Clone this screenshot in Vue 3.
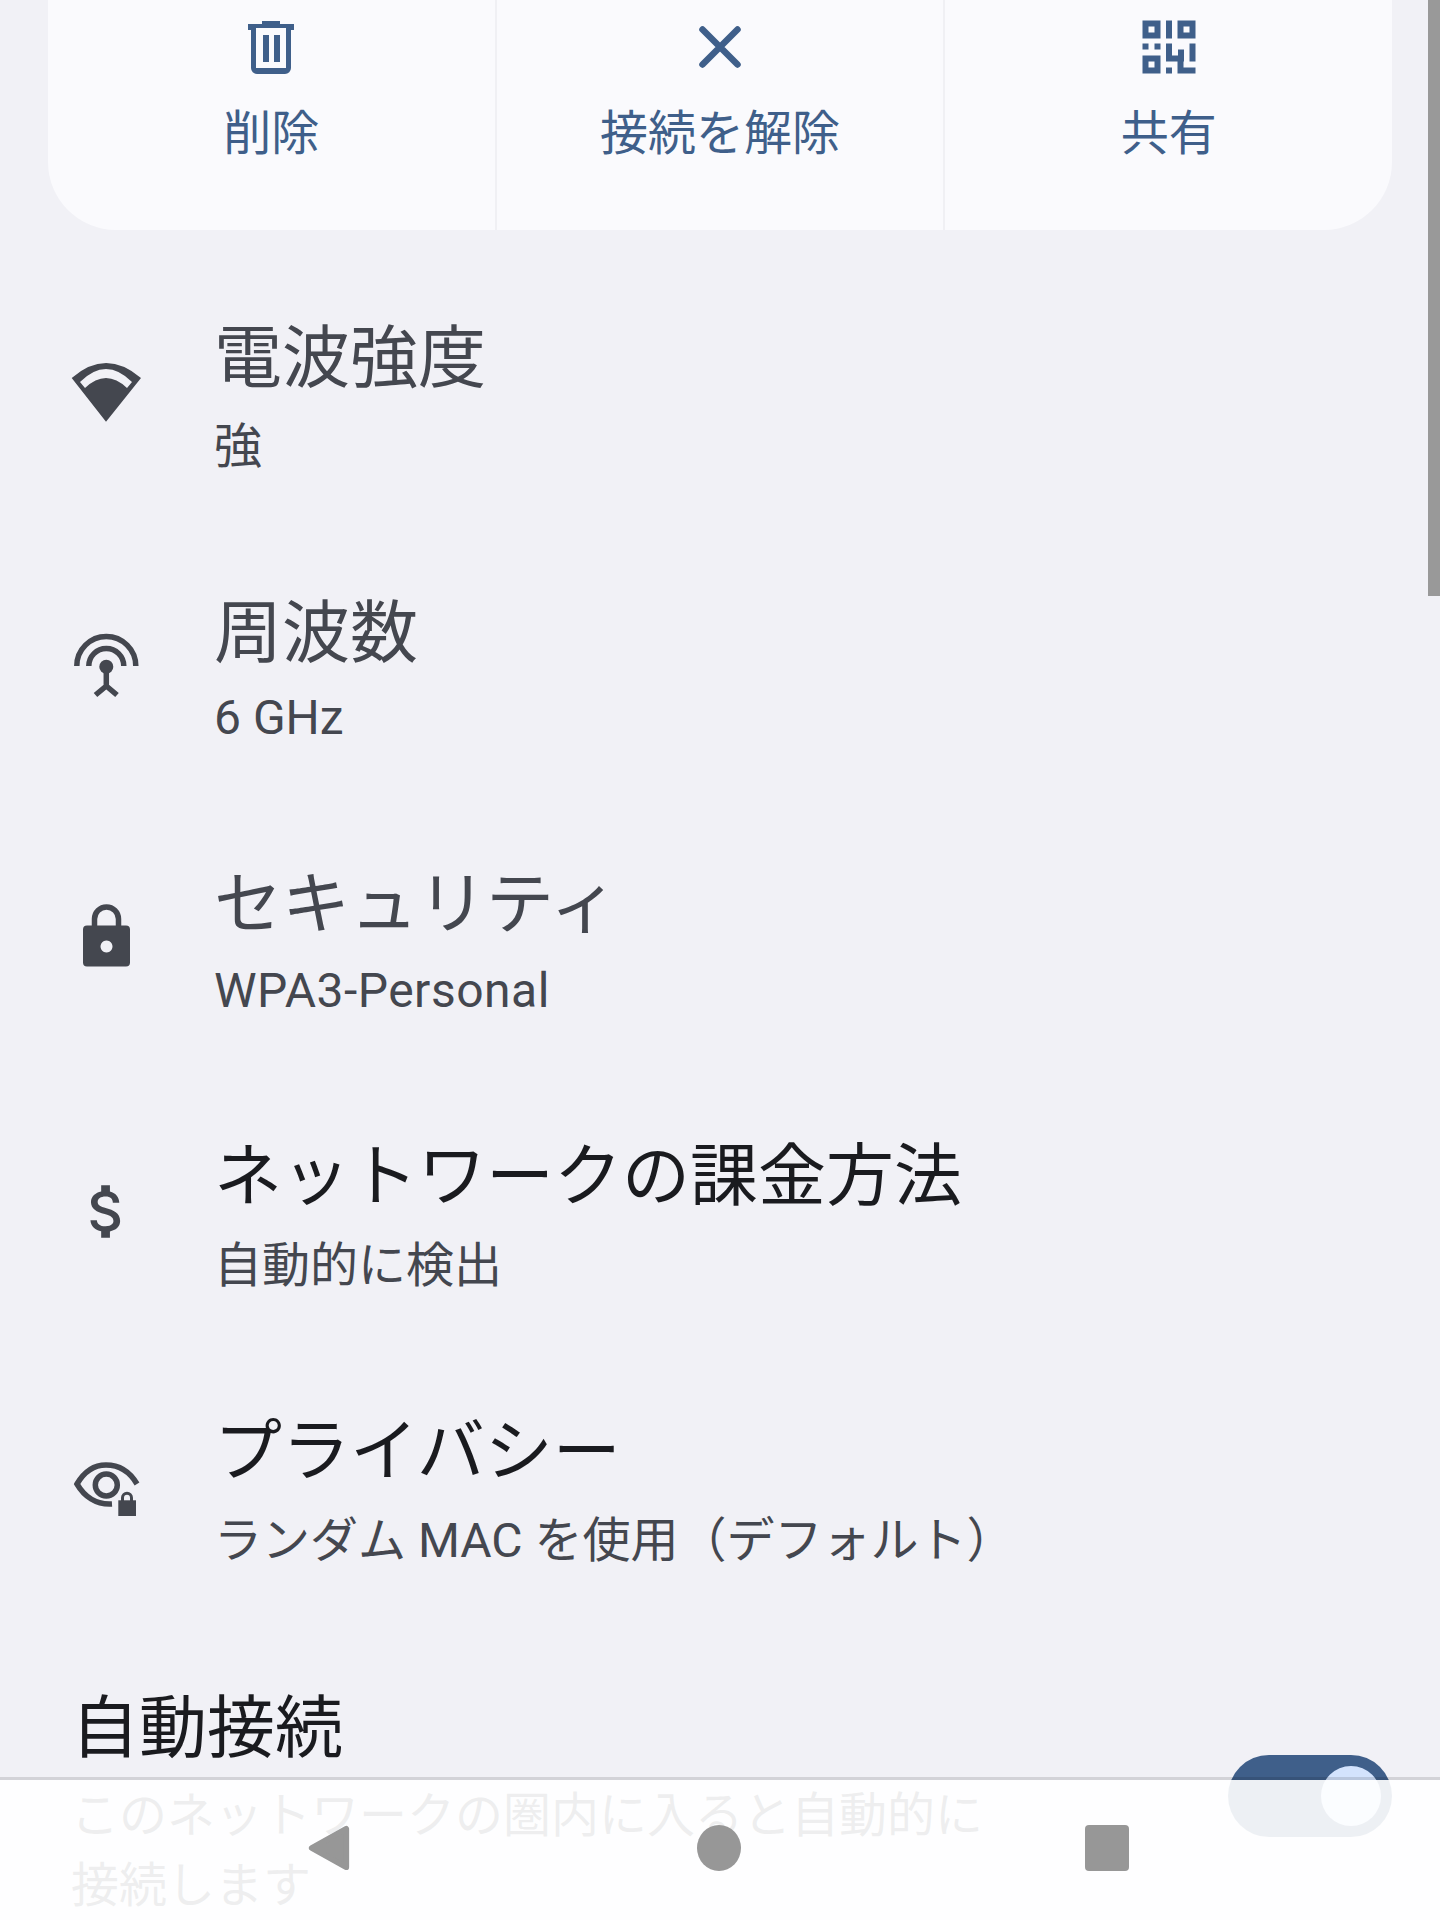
<template>
  <div class="screen">
    <div class="actions">
      <div class="action">
        <svg class="action-icon" viewBox="0 0 60 60">
          <path fill-rule="evenodd" d="M21 4h18v3h14v6h-3v38a6 6 0 0 1-6 6H16a6 6 0 0 1-6-6V13H7V7h14zM15 11v40h30V11zM22 18h6v27h-6zM33 18h6v27h-6z" />
        </svg>
        <span>削除</span>
      </div>
      <div class="action">
        <svg class="action-icon" viewBox="0 0 60 60">
          <path d="M12.5 12.5l35 35M47.5 12.5l-35 35" fill="none" stroke-width="6.5" stroke-linecap="round" />
        </svg>
        <span>接続を解除</span>
      </div>
      <div class="action">
        <svg class="action-icon" viewBox="0 0 60 60">
          <path fill-rule="evenodd" d="M3.5 3.5h18v18h-18zM9.5 9.5v6h6v-6zM38.5 3.5h18v18h-18zM44.5 9.5v6h6v-6zM3.5 38.5h18v18h-18zM9.5 44.5v6h6v-6z" />
          <path d="M27 3.5h6v18h-6zM3.5 26.500h6v6h-6zM15.500 26.500h6v6h-6zM27 26.500h6v12h6v-6h6v12H27zM50.500 26.500h6v18h-6zM27 50.500h6v6h-6zM38.500 44.500h6v6h12v6h-18z" />
        </svg>
        <span>共有</span>
      </div>
    </div>

    <div class="rows">
      <div v-for="row in rows" :key="row.title" class="row" :style="{ height: row.height + 'px' }">
        <div class="row-icon">
          <svg v-if="row.icon === 'wifi'" viewBox="0 0 80 80">
            <path fill-rule="evenodd" d="M5.700 26Q40-4 75 26L40 69.700ZM14 30Q40 4 66 30L61 36Q40 16 19 36Z" />
          </svg>
          <svg v-else-if="row.icon === 'freq'" viewBox="0 0 80 80">
            <g class="line">
              <path d="M10.800 41A29.500 29.500 0 0 1 69.800 41" />
              <path d="M22.800 41A17.500 17.500 0 0 1 57.800 41" />
              <path d="M40.300 45V61M29.500 70L40.300 61L51 70" />
            </g>
            <circle cx="40.300" cy="41.700" r="7" />
          </svg>
          <svg v-else-if="row.icon === 'lock'" viewBox="0 1.500 80 80">
            <path class="line" d="M28.500 32V23.500A12 12 0 0 1 52.500 23.500V32" />
            <path fill-rule="evenodd" d="M21 30H60a4 4 0 0 1 4 4V67a4 4 0 0 1-4 4H21a4 4 0 0 1-4-4V34a4 4 0 0 1 4-4ZM40.500 45a6 6 0 1 0 .01 0Z" />
          </svg>
          <svg v-else-if="row.icon === 'money'" viewBox="-2.060 -2.200 27.430 27.430">
            <path d="M11.800 10.900c-2.270-.59-3-1.200-3-2.150 0-1.090 1.010-1.850 2.700-1.850 1.780 0 2.440.85 2.500 2.100h2.210c-.07-1.720-1.120-3.300-3.210-3.810V3h-3v2.160c-1.940.42-3.500 1.680-3.500 3.610 0 2.310 1.910 3.460 4.700 4.130 2.500.6 3 1.480 3 2.410 0 .69-.49 1.790-2.700 1.790-2.060 0-2.870-.92-2.980-2.100h-2.200c.12 2.190 1.760 3.420 3.680 3.830V21h3v-2.150c1.950-.37 3.500-1.500 3.500-3.550 0-2.840-2.430-3.810-4.700-4.400z" />
          </svg>
          <svg v-else viewBox="0 0 80 80">
            <g class="line">
              <path d="M46 59C30 60 18 51 11 39C18 27 28 20 40 20C53 20 64 27 71 39" />
              <circle cx="40.300" cy="40" r="11" />
              <path class="thin" d="M56.500 56V52.700A4.500 4.500 0 0 1 65.500 52.700V56" />
            </g>
            <rect x="52.300" y="55.300" width="17.700" height="15.700" />
          </svg>
        </div>
        <div class="row-text">
          <div class="title" :class="{ dark: row.dark }">{{ row.title }}</div>
          <div class="sub" :class="{ latin: row.latin }" :style="{ marginTop: row.gap + 'px' }">{{ row.sub }}</div>
        </div>
      </div>
    </div>

    <div class="auto">
      <div class="auto-text">
        <div class="title dark">自動接続</div>
        <div class="auto-desc">このネットワークの圏内に入ると自動的に接続します</div>
      </div>
      <div class="toggle"><div class="thumb"></div></div>
    </div>

    <div class="scrollbar"></div>

    <div class="navbar">
      <svg class="nav-btn back" viewBox="0 0 44 48">
        <path d="M40 4V44L4 24Z" stroke-width="6" stroke-linejoin="round" />
      </svg>
      <div class="nav-btn circle"></div>
      <div class="nav-btn square"></div>
    </div>
  </div>
</template>

<script setup>
const rows = [
  { icon: "wifi", title: "電波強度", sub: "強", height: 274, gap: 7 },
  { icon: "freq", title: "周波数", sub: "6 GHz", height: 272, gap: 3 },
  { icon: "lock", title: "セキュリティ", sub: "WPA3-Personal", latin: true, height: 272, gap: 5 },
  { icon: "money", title: "ネットワークの課金方法", sub: "自動的に検出", dark: true, height: 274, gap: 8 },
  { icon: "eye", title: "プライバシー", sub: "ランダム MAC を使用（デフォルト）", dark: true, height: 276, gap: 8 },
];
</script>

<style>
body {
  background: #f1f1f6;
}
</style>

<style scoped>
.screen {
  position: relative;
  width: 1440px;
  height: 1920px;
  overflow: hidden;
  background: #f1f1f6;
  font-family: Roboto, "Noto Sans CJK JP", sans-serif;
}

.actions {
  display: flex;
  width: 1344px;
  height: 230px;
  margin-left: 48px;
  background: #fafafd;
  border-radius: 0 0 68px 68px;
}

.action {
  flex: 1;
  display: flex;
  flex-direction: column;
  align-items: center;
  padding-top: 17px;
  color: #3f5f8a;
  font-size: 48px;
  line-height: 70px;
}

.action + .action {
  border-left: 2px solid #f0f0f4;
}

.action-icon {
  width: 60px;
  height: 60px;
  margin-bottom: 22px;
  fill: #3f5f8a;
  stroke: #3f5f8a;
  stroke-width: 0;
}

.rows {
  margin-top: 34px;
}

.row {
  display: flex;
  align-items: center;
  padding-left: 66px;
}

.row-icon {
  width: 80px;
  height: 80px;
  margin-bottom: 18px;
  margin-right: 68px;
}

.row-icon svg {
  display: block;
  width: 80px;
  height: 80px;
  fill: #44474f;
}

.row-text {
  margin-bottom: 7px;
}

.line {
  fill: none;
  stroke: #44474f;
  stroke-width: 5.5;
}

.thin {
  stroke-width: 3;
}

.title {
  font-size: 68px;
  line-height: 92px;
  color: #44474f;
}

.title.dark {
  color: #1a1b1f;
}

.sub {
  font-size: 48px;
  line-height: 70px;
  color: #44474f;
}

.sub.latin {
  letter-spacing: 0.5px;
}

.auto {
  display: flex;
  align-items: center;
  justify-content: space-between;
  margin-top: 51px;
  padding: 0 48px 0 71px;
}

.auto-text {
  width: 940px;
}

.auto-desc {
  margin-top: 6px;
  font-size: 48px;
  line-height: 70px;
  color: #44474f;
}

.toggle {
  width: 164px;
  height: 82px;
  margin-bottom: 12px;
  padding: 11px;
  box-sizing: border-box;
  display: flex;
  justify-content: flex-end;
  background: #3f5f8a;
  border-radius: 41px;
}

.thumb {
  width: 60px;
  height: 60px;
  border-radius: 50%;
  background: #d3e3fd;
}

.scrollbar {
  position: absolute;
  top: 0;
  right: 0;
  width: 12px;
  height: 596px;
  background: #999;
}

.navbar {
  position: absolute;
  left: 0;
  right: 0;
  bottom: 0;
  height: 143px;
  padding: 45px 4px 0 0;
  box-sizing: border-box;
  display: flex;
  justify-content: center;
  gap: 346px;
  background: rgba(255, 255, 255, 0.91);
  background-clip: padding-box;
  border-top: 3px solid rgba(0, 0, 0, 0.12);
}

.nav-btn {
  width: 44px;
  height: 46px;
  fill: #979797;
  stroke: #979797;
}

.circle {
  border-radius: 50%;
  background: #979797;
}

.square {
  margin-left: -2px;
  border-radius: 4px;
  background: #979797;
}
</style>
